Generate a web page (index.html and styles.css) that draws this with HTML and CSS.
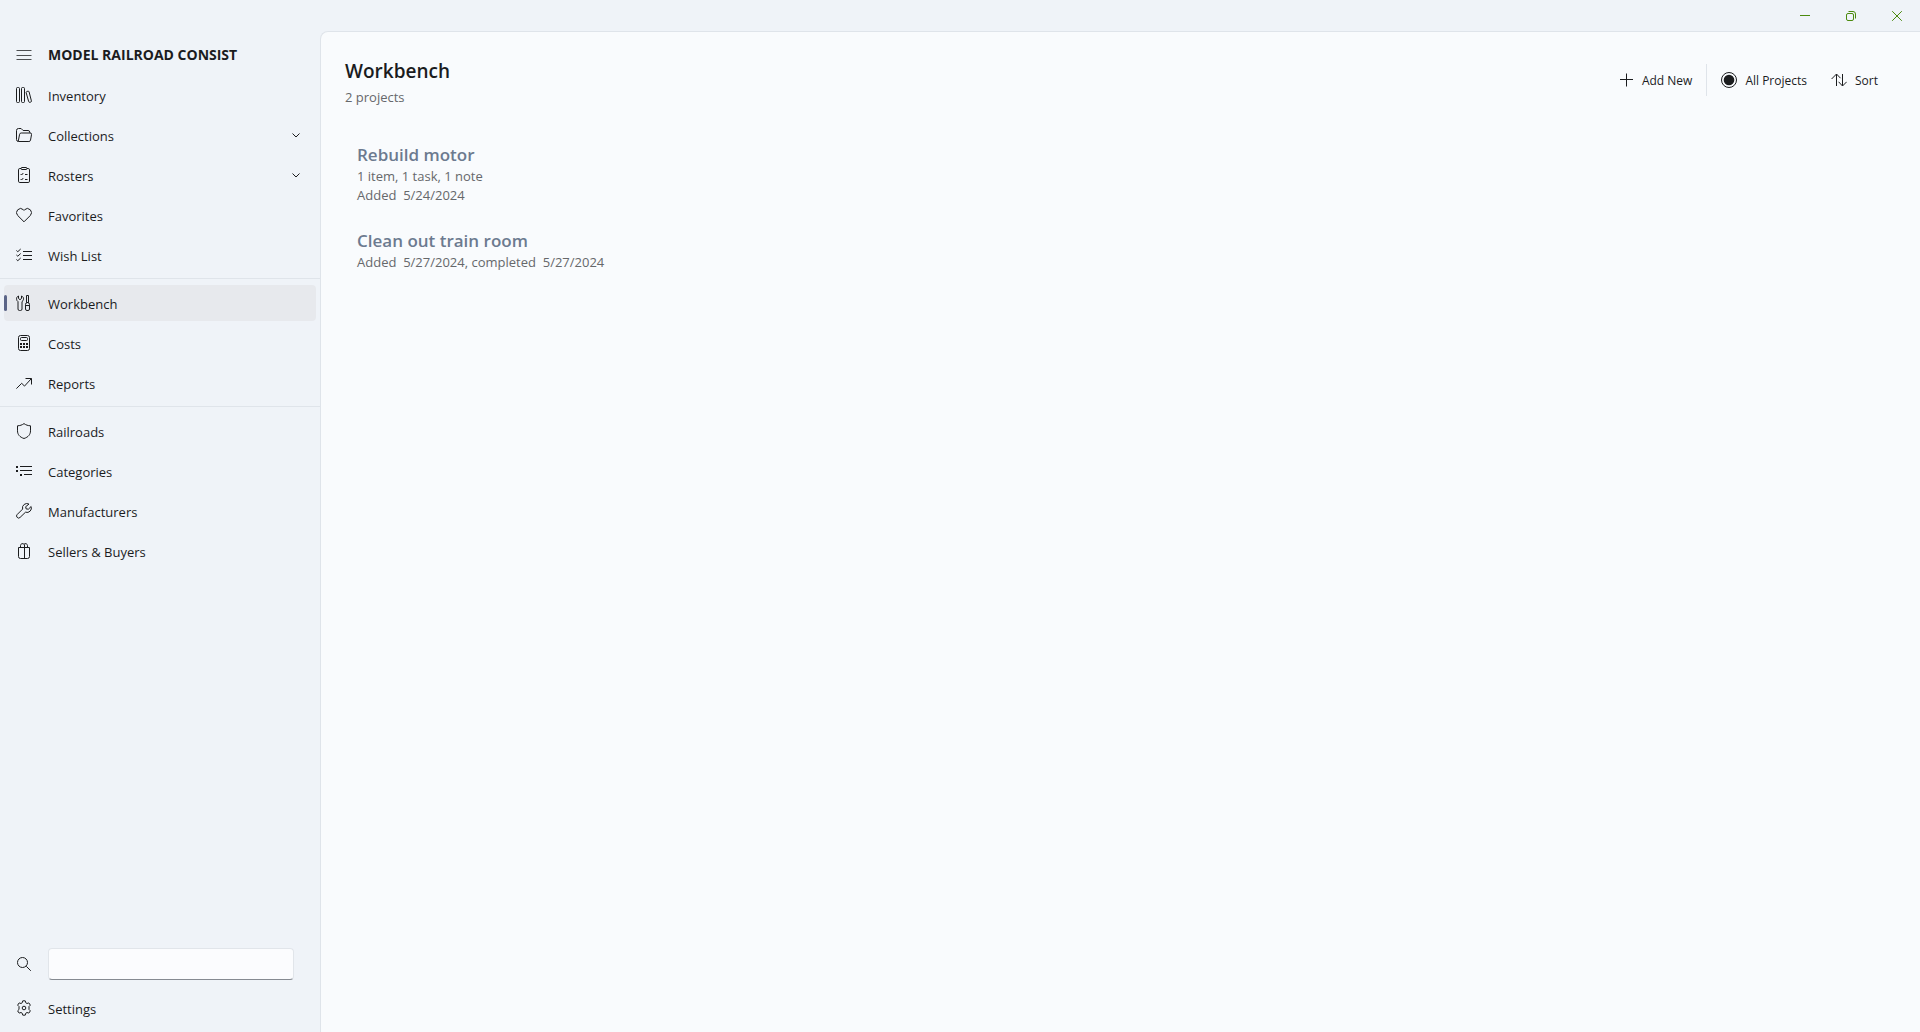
FILE: index.html
```html
<!DOCTYPE html>
<html lang="en">
<head>
<meta charset="utf-8">
<meta name="viewport" content="width=device-width, initial-scale=1">
<title>Model Railroad Consist</title>
<link rel="stylesheet" href="styles.css">
</head>
<body>
<div class="app">
  <header class="titlebar">
    <button class="win-btn" type="button" aria-label="Minimize"><svg class="glyph" viewBox="0 0 12 12"><path d="M1 5.500h10"/></svg></button>
    <button class="win-btn" type="button" aria-label="Restore"><svg class="glyph" viewBox="0 0 12 12"><rect x="1.5" y="3.5" width="7" height="7" rx="1.5"/><path d="M3.5 1.5h4.500a2.500 2.500 0 0 1 2.500 2.500v4.500"/></svg></button>
    <button class="win-btn" type="button" aria-label="Close"><svg class="glyph" viewBox="0 0 12 12"><path d="M1.200 1.200l9.600 9.600M10.800 1.200l-9.600 9.600"/></svg></button>
  </header>

  <aside class="sidebar">
    <div class="brand">
      <button class="menu-btn" type="button" aria-label="Toggle navigation"><svg class="icon thin" viewBox="0 0 16 16"><path d="M.5 3.500h15M.5 8.500h15M.5 12.500h15"/></svg></button>
      <span class="brand-name">MODEL RAILROAD CONSIST</span>
    </div>
    <nav class="nav" aria-label="Main">
      <ul class="nav-group">
        <li><a class="nav-item" href="#inventory"><svg class="icon" viewBox="0 0 16 16"><rect x=".5" y=".5" width="3" height="15" rx="1"/><rect x="5.500" y=".5" width="3" height="15" rx="1"/><path d="M10.600 4.600l1.300-.4a1 1 0 0 1 1.200.7l2.300 9a1 1 0 0 1-.7 1.200l-.8.2a1 1 0 0 1-1.200-.7l-2.500-8.800a1 1 0 0 1 .4-1.200z"/></svg><span class="label">Inventory</span></a></li>
        <li><a class="nav-item" href="#collections"><svg class="icon" viewBox="0 0 16 16"><path d="M2.200 14.500L3.600 7.300a1.600 1.600 0 0 1 1.600-1.300h8.900a1.400 1.400 0 0 1 1.400 1.700l-1 5.500a1.600 1.600 0 0 1-1.600 1.300H2.500a2 2 0 0 1-2-2V3.500a2 2 0 0 1 2-2h2.600l2 2h4.900a1.800 1.800 0 0 1 1.800 1.800V6"/></svg><span class="label">Collections</span><svg class="chevron" viewBox="0 0 10 10"><path d="M1.500 3.500L5 7l3.500-3.500"/></svg></a></li>
        <li><a class="nav-item" href="#rosters"><svg class="icon" viewBox="0 0 16 16"><path d="M5 1.500H3.800a1.300 1.300 0 0 0-1.300 1.300v11.400a1.300 1.300 0 0 0 1.300 1.300h8.400a1.300 1.300 0 0 0 1.300-1.300V2.800a1.300 1.300 0 0 0-1.300-1.300H11"/><rect x="5" y=".5" width="6" height="2" rx="1"/><path d="M4.600 7l1 1 1.700-2M4.600 12l1 1 1.700-2M9 7.500h2.500M9 12.500h2.500"/></svg><span class="label">Rosters</span><svg class="chevron" viewBox="0 0 10 10"><path d="M1.500 3.500L5 7l3.500-3.500"/></svg></a></li>
        <li><a class="nav-item" href="#favorites"><svg class="icon" viewBox="0 0 16 16"><path d="M8 14.800L1.700 8.500a4.100 4.100 0 0 1 0-5.700 4.100 4.100 0 0 1 5.800 0L8 3.300l.5-.5a4.100 4.100 0 0 1 5.800 0 4.100 4.100 0 0 1 0 5.700z"/></svg><span class="label">Favorites</span></a></li>
        <li><a class="nav-item" href="#wish-list"><svg class="icon" viewBox="0 0 16 16"><path d="M.4 3.500l1.400 1.200L4.700 2M.4 8l1.400 1.200 2.900-2.700M.4 12.500l1.400 1.200L4.700 11M7 4.500h9M7 8.500h9M7 12.500h9"/></svg><span class="label">Wish List</span></a></li>
      </ul>
      <ul class="nav-group">
        <li><a class="nav-item current" href="#workbench" aria-current="page"><svg class="icon" viewBox="0 0 16 16"><path d="M2.500 1v2.500L4 4.700l1.500-1.200V1C7 1.600 7.700 2.700 7.500 4.300 7.400 5.300 6.900 6 6 6.600V14a1.500 1.500 0 0 1-1.500 1.500h-1A1.500 1.500 0 0 1 2 14V6.600C1.100 6 .7 5.300.6 4.300.4 2.700 1 1.600 2.500 1zM10.500.5h2v7h-2zM9.500 9.500a2 2 0 0 1 4 0V14a1.500 1.500 0 0 1-1.500 1.500h-1A1.500 1.500 0 0 1 9.500 14zM9.500 10.500h4"/></svg><span class="label">Workbench</span></a></li>
        <li><a class="nav-item" href="#costs"><svg class="icon" viewBox="0 0 16 16"><rect x="2.500" y=".5" width="11" height="15" rx="2"/><rect x="4.500" y="2.500" width="7" height="3" rx="1"/><path class="dots" d="M4 8h2v2H4zM7 8h2v2H7zM10 8h2v2h-2zM4 11h2v2H4zM7 11h2v2H7zM10 11h2v2h-2z"/></svg><span class="label">Costs</span></a></li>
        <li><a class="nav-item" href="#reports"><svg class="icon" viewBox="0 0 16 16"><path d="M.4 13.600l5.300-5.300 2.800 2.800 6.800-7.400M9.500 3.500h6v6"/></svg><span class="label">Reports</span></a></li>
      </ul>
      <ul class="nav-group">
        <li><a class="nav-item" href="#railroads"><svg class="icon" viewBox="0 0 16 16"><path d="M8 .6c1.900 1.400 4 2.100 6.500 2.200v5c0 3.700-2.200 6.300-6.500 7.700C3.700 14.100 1.500 11.500 1.500 7.800v-5C4 2.700 6.100 2 8 .6z"/></svg><span class="label">Railroads</span></a></li>
        <li><a class="nav-item" href="#categories"><svg class="icon" viewBox="0 0 16 16"><path d="M4 3.500h12M4 7.500h12M8 11.500h8"/><path class="dots" d="M0 3h2v2H0zM0 7h2v2H0zM4 11h2v2H4z"/></svg><span class="label">Categories</span></a></li>
        <li><a class="nav-item" href="#manufacturers"><svg class="icon" viewBox="0 0 16 16"><path d="M13 1.100a4.400 4.400 0 0 0-6.400 5L1.200 11.500a2 2 0 0 0 0 2.900 2 2 0 0 0 2.900 0L9.500 9.200a4.400 4.400 0 0 0 5.600-5.700l-2.700 2.700-2.300-.3-.4-2.200z"/></svg><span class="label">Manufacturers</span></a></li>
        <li><a class="nav-item" href="#sellers-buyers"><svg class="icon" viewBox="0 0 16 16"><path d="M2.500 4.500h11v9a2 2 0 0 1-2 2h-7a2 2 0 0 1-2-2zM4.500 4.500V2.600a2 2 0 0 1 3.500-1.300A2 2 0 0 1 11.500 2.600v1.900M8.500 1.500v14"/></svg><span class="label">Sellers &amp; Buyers</span></a></li>
      </ul>
    </nav>
    <form class="search" role="search">
      <label class="search-label" for="search" aria-label="Search"><svg class="icon" viewBox="0 0 16 16"><circle cx="6.500" cy="6.500" r="5"/><path d="M10.300 10.300l4.500 4.500"/></svg></label>
      <input class="search-box" id="search" type="text">
    </form>
    <a class="nav-item" href="#settings"><svg class="icon" viewBox="0 0 16 16"><circle cx="8" cy="8" r="1.800"/><path d="M6.700.9a7 7 0 0 1 2.600 0l.4 1.800 1.300.8 1.800-.6a7 7 0 0 1 1.500 2.300l-1.300 1.300v3l1.300 1.300a7 7 0 0 1-1.500 2.300l-1.800-.6-1.300.8-.4 1.800a7 7 0 0 1-2.600 0l-.4-1.800-1.300-.8-1.800.6a7 7 0 0 1-1.500-2.300L3 9.500v-3L1.700 5.200a7 7 0 0 1 1.500-2.300l1.800.6 1.300-.8z"/></svg><span class="label">Settings</span></a>
  </aside>

  <main class="page">
    <div class="page-head">
      <div>
        <h1 class="page-title">Workbench</h1>
        <p class="page-count">2 projects</p>
      </div>
      <div class="toolbar">
        <button class="tool" type="button"><svg class="icon" viewBox="0 0 16 16"><path d="M8.500 1.500v13M2 7.500h13"/></svg>Add New</button>
        <span class="tool-divider"></span>
        <button class="tool" type="button"><svg class="icon" viewBox="0 0 16 16"><circle cx="8" cy="8" r="7.500"/><circle class="dots" cx="8" cy="8" r="5.300"/></svg>All Projects</button>
        <button class="tool" type="button"><svg class="icon" viewBox="0 0 16 16"><path d="M5.500 14V2.200M.6 7l4.900-5 4 4.200M11.500 2v11.800M7.600 9.800l3.900 4.200 4.200-4.200"/></svg>Sort</button>
      </div>
    </div>
    <ul class="projects">
      <li class="project">
        <h2 class="project-name">Rebuild motor</h2>
        <p class="project-line">1 item, 1 task, 1 note</p>
        <p class="project-line">Added&nbsp; 5/24/2024</p>
      </li>
      <li class="project">
        <h2 class="project-name">Clean out train room</h2>
        <p class="project-line">Added&nbsp; 5/27/2024, completed&nbsp; 5/27/2024</p>
      </li>
    </ul>
  </main>
</div>
</body>
</html>
```
FILE: styles.css
```css
:root {
  --chrome: #eff3f8;
  --surface: #f9fbfd;
  --line: #dfe4ea;
  --text: #1b1c1e;
  --muted: #66686b;
  --slate: #6c7a8f;
  --accent: #5b6587;
  --green: #4b8a0e;
}

* {
  box-sizing: border-box;
}

body,
h1,
h2,
p,
ul {
  margin: 0;
  padding: 0;
}

ul {
  list-style: none;
}

body {
  background: var(--chrome);
  color: var(--text);
  font: 13px/19px "Open Sans", "Noto Sans", sans-serif;
}

button {
  padding: 0;
  border: 0;
  background: none;
  color: inherit;
  font: inherit;
}

svg {
  flex: none;
  fill: none;
  stroke: currentColor;
}

.dots {
  fill: currentColor;
  stroke: none;
}

.app {
  display: grid;
  grid-template: auto 1fr / 320px 1fr;
  min-height: 100vh;
}

/* Title bar */
.titlebar {
  grid-column: 1 / -1;
  display: flex;
  justify-content: flex-end;
  height: 31px;
}

.win-btn {
  display: grid;
  place-items: center;
  width: 46px;
  color: var(--green);
}

.glyph {
  width: 12px;
  height: 12px;
}

/* Sidebar */
.sidebar {
  display: flex;
  flex-direction: column;
  padding: 4px 0;
}

.brand {
  display: flex;
  align-items: center;
  gap: 16px;
  height: 40px;
  padding: 0 16px;
}

.menu-btn {
  display: flex;
}

.brand-name {
  font-size: 14px;
  font-weight: 700;
  line-height: 18px;
}

.icon {
  width: 16px;
  height: 16px;
}

.thin {
  color: #4c4e51;
}

.nav {
  flex: 1;
}

.nav-group li {
  display: flow-root;
}

.nav-group + .nav-group {
  margin-top: 3px;
  padding-top: 4px;
  border-top: 1px solid var(--line);
}

.nav-item {
  position: relative;
  display: flex;
  align-items: center;
  gap: 16px;
  height: 36px;
  margin: 2px 4px;
  padding: 0 12px;
  border-radius: 4px;
  color: inherit;
  text-decoration: none;
}

.label {
  flex: 1;
  padding-top: 2px;
}

.chevron {
  width: 10px;
  height: 10px;
  margin-right: 3px;
}

.current {
  background: #e7e9ed;
}

.current::before {
  content: "";
  position: absolute;
  left: 0;
  top: 10px;
  width: 3px;
  height: 16px;
  border-radius: 2px;
  background: var(--accent);
}

.search {
  display: flex;
  align-items: center;
  gap: 16px;
  margin-bottom: 8px;
  padding: 0 26px 0 16px;
}

.search-label {
  display: flex;
}

.search-box {
  flex: 1;
  height: 32px;
  padding: 0 12px;
  border: 1px solid #e1e5ea;
  border-bottom-color: #858a91;
  border-radius: 4px;
  outline: 0;
  background: #fbfcfe;
  color: inherit;
  font: inherit;
}

/* Page */
.page {
  padding: 24px 30px 24px 24px;
  border-top: 1px solid var(--line);
  border-left: 1px solid var(--line);
  border-top-left-radius: 8px;
  background: var(--surface);
}

.page-head {
  display: flex;
  justify-content: space-between;
  align-items: flex-start;
  margin-bottom: 23px;
}

.page-title {
  font-size: 19px;
  font-weight: 600;
  line-height: 30px;
}

.page-count {
  color: var(--muted);
  line-height: 22px;
}

.toolbar {
  display: flex;
  align-items: center;
}

.tool {
  display: flex;
  align-items: center;
  gap: 8px;
  height: 48px;
  padding: 0 12px;
  font-size: 12px;
}

.tool-divider {
  width: 1px;
  height: 32px;
  margin: 0 2px;
  background: var(--line);
}

.project {
  padding: 12px;
}

.project-name {
  color: var(--slate);
  font-size: 17px;
  font-weight: 600;
  line-height: 24px;
}

.project-line {
  color: var(--muted);
}
```
